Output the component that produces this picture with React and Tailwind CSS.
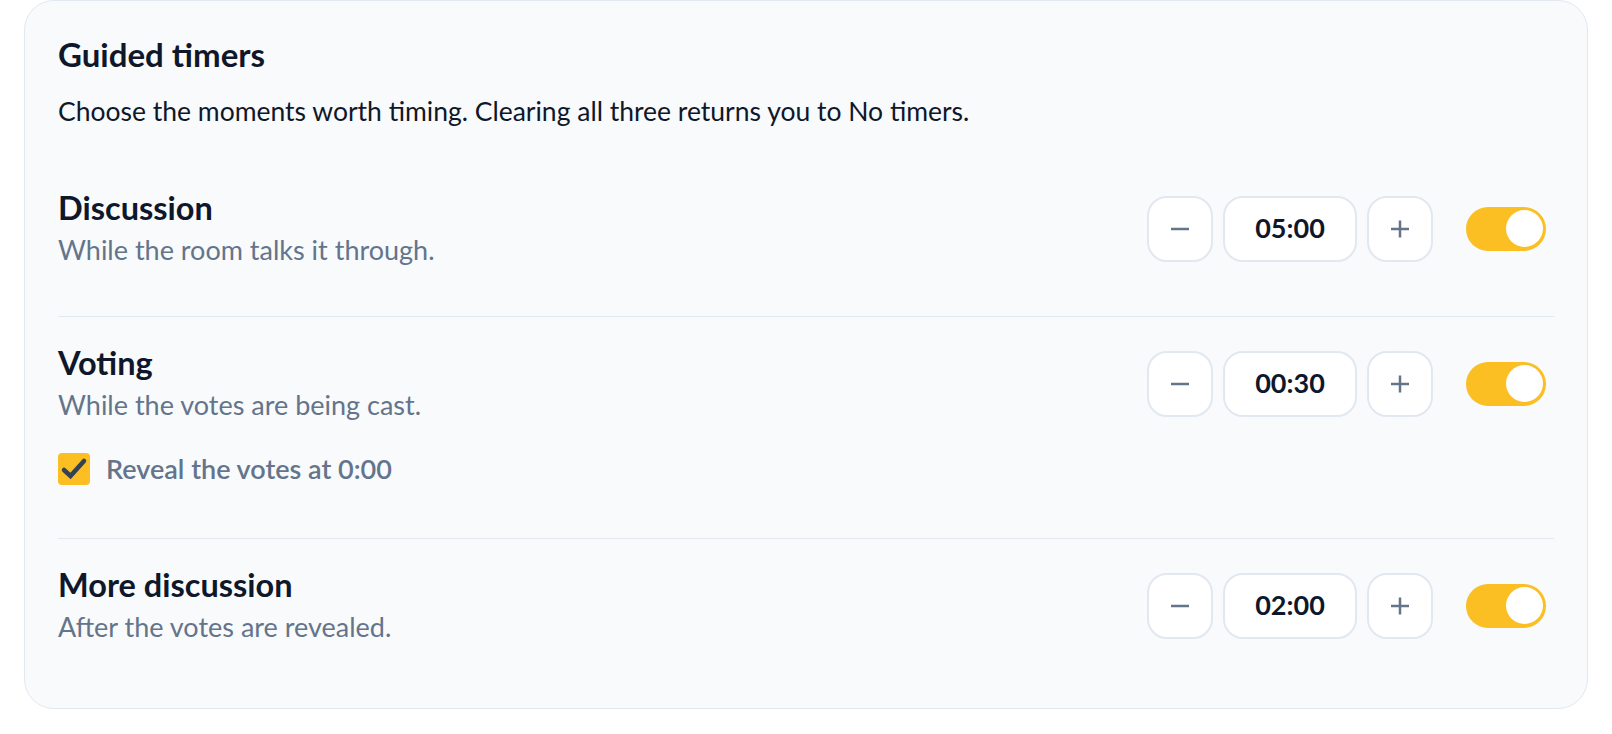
import React from "react";

const rows = [
  { title: "Discussion", hint: "While the room talks it through.", time: "05:00" },
  { title: "Voting", hint: "While the votes are being cast.", time: "00:30", reveal: true },
  { title: "More discussion", hint: "After the votes are revealed.", time: "02:00" },
];

function StepButton({ kind }) {
  return (
    <button className="flex h-[66px] w-[66px] items-center justify-center rounded-[20px] border-2 border-[#e2e8f0] bg-white">
      <svg width="20" height="20" viewBox="0 0 20 20" fill="none" stroke="#64748b" strokeWidth="2.5">
        <line x1="1" y1="10" x2="19" y2="10" />
        {kind === "plus" && <line x1="10" y1="1.5" x2="10" y2="18.5" />}
      </svg>
    </button>
  );
}

function Toggle() {
  return (
    <div className="flex h-[44px] w-[80px] items-center justify-end rounded-full bg-[#fbbf24] pr-[3.5px]">
      <div className="h-[37px] w-[37px] rounded-full bg-white" />
    </div>
  );
}

function TimerRow({ row, first, last }) {
  return (
    <div
      className={
        (first ? "pt-0 " : "pt-[26px] ") +
        (last ? "pb-[29px]" : row.reveal ? "pb-[49px] border-b border-[#e2e8f0]" : "pb-[47px] border-b border-[#e2e8f0]")
      }
    >
      <div className="flex items-center justify-between">
        <div className="flex flex-col">
          <h3 className="text-[32.5px] font-bold leading-[40px] text-[#0f172a]">{row.title}</h3>
          <p className="mt-[3px] text-[27px] leading-[38px] text-[#64748b]">{row.hint}</p>
        </div>
        <div className="flex items-center pr-2">
          <div className="flex items-center gap-[10px]">
            <StepButton kind="minus" />
            <div className="flex h-[66px] w-[134px] items-center justify-center rounded-[20px] border-2 border-[#e2e8f0] bg-white text-[27px] font-bold text-[#0f172a]">
              {row.time}
            </div>
            <StepButton kind="plus" />
          </div>
          <div className="ml-[33px]">
            <Toggle />
          </div>
        </div>
      </div>
      {row.reveal && (
        <label className="mt-[25px] flex items-center">
          <span className="flex h-8 w-8 items-center justify-center rounded-[4px] bg-[#fbbf24]">
            <svg width="32" height="32" viewBox="0 0 32 32" fill="none">
              <path d="M6 17 L12.5 23 L26 8" stroke="#334155" strokeWidth="4.5" strokeLinecap="round" strokeLinejoin="miter" />
            </svg>
          </span>
          <span className="ml-4 text-[27px] font-semibold leading-[40px] text-[#64748b]">Reveal the votes at 0:00</span>
        </label>
      )}
    </div>
  );
}

export default function App() {
  return (
    <div className="min-h-screen bg-white px-6" style={{ fontFamily: "Lato, 'Noto Sans', sans-serif" }}>
      <div className="rounded-[30px] border border-[#e2e8f0] bg-[#f8fafc] px-[33px] pt-[33px] pb-[33px]">
        <h2 className="text-[33px] font-bold leading-[40px] text-[#0f172a]">Guided timers</h2>
        <p className="mt-5 text-[26.5px] leading-[34px] text-[#0f172a]">
          Choose the moments worth timing. Clearing all three returns you to No timers.
        </p>
        <div className="mt-[60px]">
          {rows.map((row, i) => (
            <TimerRow key={row.title} row={row} first={i === 0} last={i === rows.length - 1} />
          ))}
        </div>
      </div>
    </div>
  );
}
